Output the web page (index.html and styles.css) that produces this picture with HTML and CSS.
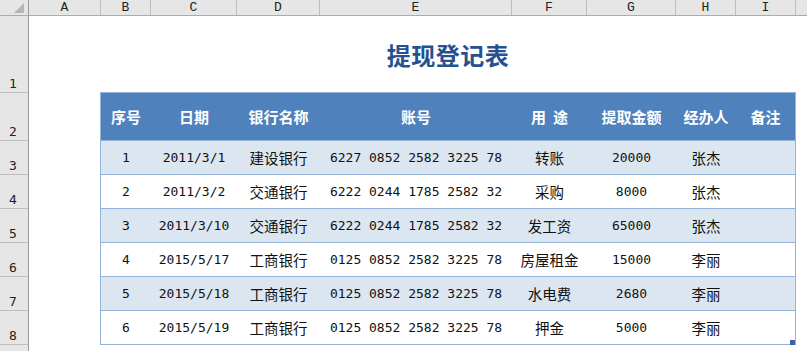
FILE: index.html
```html
<!DOCTYPE html>
<html lang="zh-CN">
<head>
<meta charset="utf-8">
<title>提现登记表</title>
<link rel="stylesheet" href="styles.css">
</head>
<body>
<div class="app">
  <div class="colbar">
    <div class="corner"><span class="tri"></span></div>
    <div class="ch w-a">A</div>
    <div class="ch w-b">B</div>
    <div class="ch w-c">C</div>
    <div class="ch w-d">D</div>
    <div class="ch w-e">E</div>
    <div class="ch w-f">F</div>
    <div class="ch w-g">G</div>
    <div class="ch w-h">H</div>
    <div class="ch w-i">I</div>
    <div class="ch w-j"></div>
  </div>
  <div class="main">
    <div class="rowbar">
      <div class="rh h-1">1</div>
      <div class="rh h-2">2</div>
      <div class="rh h-r">3</div>
      <div class="rh h-r">4</div>
      <div class="rh h-r">5</div>
      <div class="rh h-r">6</div>
      <div class="rh h-r">7</div>
      <div class="rh h-r">8</div>
      <div class="rh h-r">9</div>
    </div>
    <div class="sheet">
      <div class="title-row"><h1 class="title">提现登记表</h1></div>
      <div class="grid">
        <div class="row head">
          <div class="c w-b">序号</div>
          <div class="c w-c">日期</div>
          <div class="c w-d">银行名称</div>
          <div class="c w-e">账号</div>
          <div class="c w-f">用&nbsp;&nbsp;途</div>
          <div class="c w-g">提取金额</div>
          <div class="c w-h">经办人</div>
          <div class="c w-i2">备注</div>
        </div>
        <div class="row band">
          <div class="c w-b num">1</div>
          <div class="c w-c num">2011/3/1</div>
          <div class="c w-d cn">建设银行</div>
          <div class="c w-e num">6227 0852 2582 3225 78</div>
          <div class="c w-f cn">转账</div>
          <div class="c w-g num">20000</div>
          <div class="c w-h cn">张杰</div>
          <div class="c w-i2"></div>
        </div>
        <div class="row">
          <div class="c w-b num">2</div>
          <div class="c w-c num">2011/3/2</div>
          <div class="c w-d cn">交通银行</div>
          <div class="c w-e num">6222 0244 1785 2582 32</div>
          <div class="c w-f cn">采购</div>
          <div class="c w-g num">8000</div>
          <div class="c w-h cn">张杰</div>
          <div class="c w-i2"></div>
        </div>
        <div class="row band">
          <div class="c w-b num">3</div>
          <div class="c w-c num">2011/3/10</div>
          <div class="c w-d cn">交通银行</div>
          <div class="c w-e num">6222 0244 1785 2582 32</div>
          <div class="c w-f cn">发工资</div>
          <div class="c w-g num">65000</div>
          <div class="c w-h cn">张杰</div>
          <div class="c w-i2"></div>
        </div>
        <div class="row">
          <div class="c w-b num">4</div>
          <div class="c w-c num">2015/5/17</div>
          <div class="c w-d cn">工商银行</div>
          <div class="c w-e num">0125 0852 2582 3225 78</div>
          <div class="c w-f cn">房屋租金</div>
          <div class="c w-g num">15000</div>
          <div class="c w-h cn">李丽</div>
          <div class="c w-i2"></div>
        </div>
        <div class="row band">
          <div class="c w-b num">5</div>
          <div class="c w-c num">2015/5/18</div>
          <div class="c w-d cn">工商银行</div>
          <div class="c w-e num">0125 0852 2582 3225 78</div>
          <div class="c w-f cn">水电费</div>
          <div class="c w-g num">2680</div>
          <div class="c w-h cn">李丽</div>
          <div class="c w-i2"></div>
        </div>
        <div class="row">
          <div class="c w-b num">6</div>
          <div class="c w-c num">2015/5/19</div>
          <div class="c w-d cn">工商银行</div>
          <div class="c w-e num">0125 0852 2582 3225 78</div>
          <div class="c w-f cn">押金</div>
          <div class="c w-g num">5000</div>
          <div class="c w-h cn">李丽</div>
          <div class="c w-i2"></div>
        </div>
        <span class="handle"></span>
      </div>
    </div>
  </div>
</div>
</body>
</html>
```

FILE: styles.css
```css
* { box-sizing: border-box; }
html, body { margin: 0; padding: 0; }
body {
  width: 807px;
  height: 351px;
  overflow: hidden;
  background: #ffffff;
  font-family: "Noto Sans CJK SC", sans-serif;
  color: #000;
}
.app { display: flex; flex-direction: column; height: 351px; }

/* column header bar */
.colbar {
  display: flex;
  height: 16px;
  flex: none;
  background: #e6e6e6;
  border-bottom: 1px solid #ababab;
}
.corner {
  position: relative;
  width: 29px;
  flex: none;
  border-right: 1px solid #9a9a9a;
}
.tri {
  position: absolute;
  right: 4px;
  bottom: 2px;
  width: 0;
  height: 0;
  border-left: 10px solid transparent;
  border-bottom: 10px solid #b5b5b5;
}
.ch {
  flex: none;
  border-right: 1px solid #bdbdbd;
  font-family: "Liberation Mono", monospace;
  font-size: 13px;
  line-height: 15px;
  text-align: center;
  color: #222;
}
.ch.w-a { width: 72px; }
.ch.w-b { width: 50px; }
.ch.w-c { width: 86px; }
.ch.w-d { width: 83px; }
.ch.w-e { width: 192px; }
.ch.w-f { width: 75px; }
.ch.w-g { width: 89px; }
.ch.w-h { width: 60px; }
.ch.w-i { width: 60px; }
.ch.w-j { flex: 1; border-right: 0; }

/* main area */
.main { display: flex; flex: 1; min-height: 0; }
.rowbar {
  width: 29px;
  flex: none;
  display: flex;
  flex-direction: column;
  background: #e6e6e6;
  border-right: 1px solid #9a9a9a;
}
.rh {
  flex: none;
  display: flex;
  align-items: flex-end;
  justify-content: center;
  border-bottom: 1px solid #bdbdbd;
  font-family: "DejaVu Sans Mono", monospace;
  font-size: 13px;
  line-height: 14px;
  padding-bottom: 1px;
  padding-right: 2px;
  color: #222;
}
.h-1 { height: 77px; }
.h-2 { height: 48px; }
.h-r { height: 34px; }

.sheet { flex: 1; padding-left: 71px; }
.title-row {
  width: 696px;
  height: 76px;
  display: flex;
  align-items: center;
  justify-content: center;
  padding-top: 1px;
}
.title {
  margin: 0;
  font-family: "Noto Sans CJK SC", sans-serif;
  font-weight: 700;
  font-size: 24px;
  line-height: 30px;
  color: #25518f;
  letter-spacing: 0.5px;
}

/* data table */
.grid {
  position: relative;
  width: 696px;
  border: 1px solid #95b3d7;
  border-bottom: 0;
}
.row {
  display: flex;
  height: 34px;
  border-bottom: 1px solid #95b3d7;
  background: #ffffff;
}
.row.band { background: #dce6f1; }
.row.head {
  height: 48px;
  background: #4f81bd;
  color: #ffffff;
  font-family: "Noto Sans CJK SC", sans-serif;
  font-weight: 700;
  font-size: 15px;
}
.c {
  flex: none;
  display: flex;
  align-items: center;
  justify-content: center;
  white-space: pre;
}
.w-b { width: 50px; }
.w-c { width: 86px; }
.w-d { width: 83px; }
.w-e { width: 192px; }
.w-f { width: 75px; }
.w-g { width: 89px; }
.w-h { width: 60px; }
.w-i2 { width: 59px; }

.num {
  font-family: "DejaVu Sans Mono", monospace;
  font-size: 13px;
  color: #111;
}
.cn {
  font-family: "Noto Sans CJK SC", sans-serif;
  font-size: 14.5px;
  color: #111;
}
.handle {
  position: absolute;
  right: 0;
  bottom: 0;
  width: 5px;
  height: 5px;
  background: #3b5fa8;
}
```
